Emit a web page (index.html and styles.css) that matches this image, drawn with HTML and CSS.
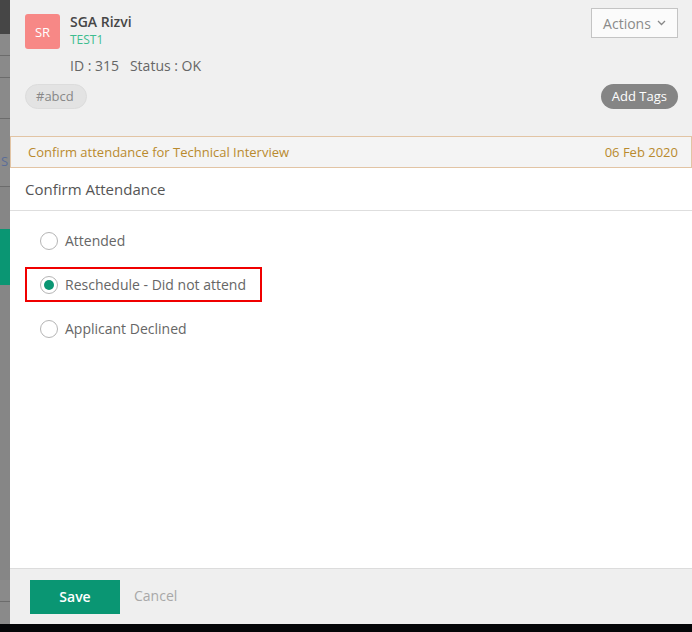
FILE: index.html
```html
<!DOCTYPE html>
<html>
<head>
<meta charset="utf-8">
<link rel="stylesheet" href="styles.css">
</head>
<body>
<div class="screen">
  <div class="backdrop">
    <div class="bd-dark"></div>
    <div class="bd-row"></div>
    <div class="bd-row"></div>
    <div class="bd-row tall"></div>
    <div class="bd-row s"><span>S</span></div>
    <div class="bd-gap"></div>
    <div class="bd-green"></div>
    <div class="bd-fill"></div>
    <div class="bd-row"></div>
    <div class="bd-row last"></div>
  </div>
  <div class="panel">
    <div class="head">
      <div class="head-top">
        <div class="avatar">SR</div>
        <div class="who">
          <div class="name">SGA Rizvi</div>
          <div class="code">TEST1</div>
          <div class="meta">ID : 315&nbsp;&nbsp; Status : OK</div>
        </div>
        <button class="actions">Actions
          <svg width="9" height="6" viewBox="0 0 9 6"><path d="M1 1l3.5 3.5L8 1" fill="none" stroke="#888" stroke-width="1.3"/></svg>
        </button>
      </div>
      <div class="head-tags">
        <span class="tag">#abcd</span>
        <span class="add-tags">Add Tags</span>
      </div>
    </div>
    <div class="notice">
      <span>Confirm attendance for Technical Interview</span>
      <span>06 Feb 2020</span>
    </div>
    <div class="section-title">Confirm Attendance</div>
    <div class="options">
      <label class="opt"><span class="radio"></span>Attended</label>
      <label class="opt selected"><span class="radio on"></span>Reschedule - Did not attend</label>
      <label class="opt"><span class="radio"></span>Applicant Declined</label>
    </div>
    <div class="footer">
      <button class="save">Save</button>
      <span class="cancel">Cancel</span>
    </div>
  </div>
</div>
<div class="taskbar"></div>
</body>
</html>
```
FILE: styles.css
```css
* { box-sizing: border-box; }
html, body { margin: 0; padding: 0; }
body {
  width: 692px;
  height: 632px;
  overflow: hidden;
  font-family: "Open Sans", "Noto Sans", sans-serif;
  background: #050608;
}
.screen {
  display: flex;
  height: 624px;
}
.backdrop {
  width: 10px;
  flex: none;
  display: flex;
  flex-direction: column;
  background: #868686;
}
.bd-dark { height: 34px; background: #464646; }
.bd-row { height: 22px; border-bottom: 1px solid #6c6c6c; background: #8a8a8a; }
.bd-row.tall { height: 41px; }
.bd-row.s { height: 68px; position: relative; overflow: hidden; }
.bd-row.s span { position: absolute; left: 1px; top: 33px; color: #5a6d99; font-size: 13px; }
.bd-gap { height: 42px; }
.bd-green { height: 56px; background: #0a9673; }
.bd-fill { flex: 1; }
.bd-row.last { border-bottom: none; }

.panel {
  flex: 1;
  display: flex;
  flex-direction: column;
  background: #fff;
}
.head {
  background: #f0f0f0;
  padding: 8px 14px 0 15px;
  height: 136px;
}
.head-top {
  display: flex;
  align-items: flex-start;
}
.avatar {
  width: 35px;
  height: 35px;
  margin-top: 6px;
  background: #f78886;
  border-radius: 3px;
  color: #fff;
  font-size: 13px;
  display: flex;
  align-items: center;
  justify-content: center;
}
.who {
  flex: 1;
  margin-left: 10px;
  margin-top: 4px;
}
.name {
  font-size: 14px;
  font-weight: 600;
  color: #464646;
  line-height: 19px;
}
.code {
  font-size: 12px;
  color: #3ebd8f;
  line-height: 18px;
}
.meta {
  font-size: 14px;
  color: #666;
  margin-top: 8px;
  line-height: 18px;
}
.actions {
  font-family: inherit;
  width: 87px;
  height: 30px;
  border: 1px solid #c4c4c4;
  background: #fbfbfb;
  color: #8a8a8a;
  font-size: 14px;
  display: flex;
  align-items: center;
  justify-content: center;
  gap: 6px;
  padding: 0;
}
.head-tags {
  display: flex;
  justify-content: space-between;
  align-items: center;
  margin-top: 9px;
}
.tag {
  height: 25px;
  padding: 0 12px 0 10px;
  border-radius: 13px;
  background: #e3e3e3;
  border: 1px solid #dcdcdc;
  color: #888;
  font-size: 13px;
  line-height: 23px;
}
.add-tags {
  height: 25px;
  padding: 0 11px;
  border-radius: 13px;
  background: #858585;
  color: #fff;
  font-size: 13px;
  line-height: 25px;
}
.notice {
  display: flex;
  justify-content: space-between;
  align-items: center;
  height: 32px;
  padding: 0 13px 0 17px;
  background: #f4f4f4;
  border: 1px solid #e2c4a4;
  color: #b98a2e;
  font-size: 13px;
}
.section-title {
  height: 43px;
  padding-left: 15px;
  display: flex;
  align-items: center;
  border-bottom: 1px solid #dedede;
  font-size: 15px;
  color: #555;
}
.options {
  flex: 1;
  padding: 12px 0 0 15px;
  display: flex;
  flex-direction: column;
  align-items: flex-start;
  gap: 9px;
}
.opt {
  display: flex;
  align-items: center;
  height: 35px;
  padding: 0 14px 0 13px;
  border: 2px solid transparent;
  font-size: 14px;
  color: #666;
}
.opt.selected { border-color: #f00000; width: 237px; }
.radio {
  width: 18px;
  height: 18px;
  border-radius: 50%;
  border: 1px solid #b5b5b5;
  background: #fff;
  margin-right: 7px;
  display: flex;
  align-items: center;
  justify-content: center;
}
.radio.on::after {
  content: "";
  width: 10px;
  height: 10px;
  border-radius: 50%;
  background: #0a9673;
}
.footer {
  height: 56px;
  background: #efefef;
  border-top: 1px solid #dcdcdc;
  display: flex;
  align-items: center;
  padding-left: 20px;
  gap: 14px;
}
.save {
  font-family: inherit;
  width: 90px;
  height: 34px;
  border: none;
  background: #0a9673;
  color: #fff;
  font-size: 14px;
  font-weight: 600;
  padding: 0;
}
.cancel {
  font-size: 14px;
  color: #a8a8a8;
  margin-top: -2px;
}
.taskbar {
  height: 8px;
  background: #050608;
}
```
